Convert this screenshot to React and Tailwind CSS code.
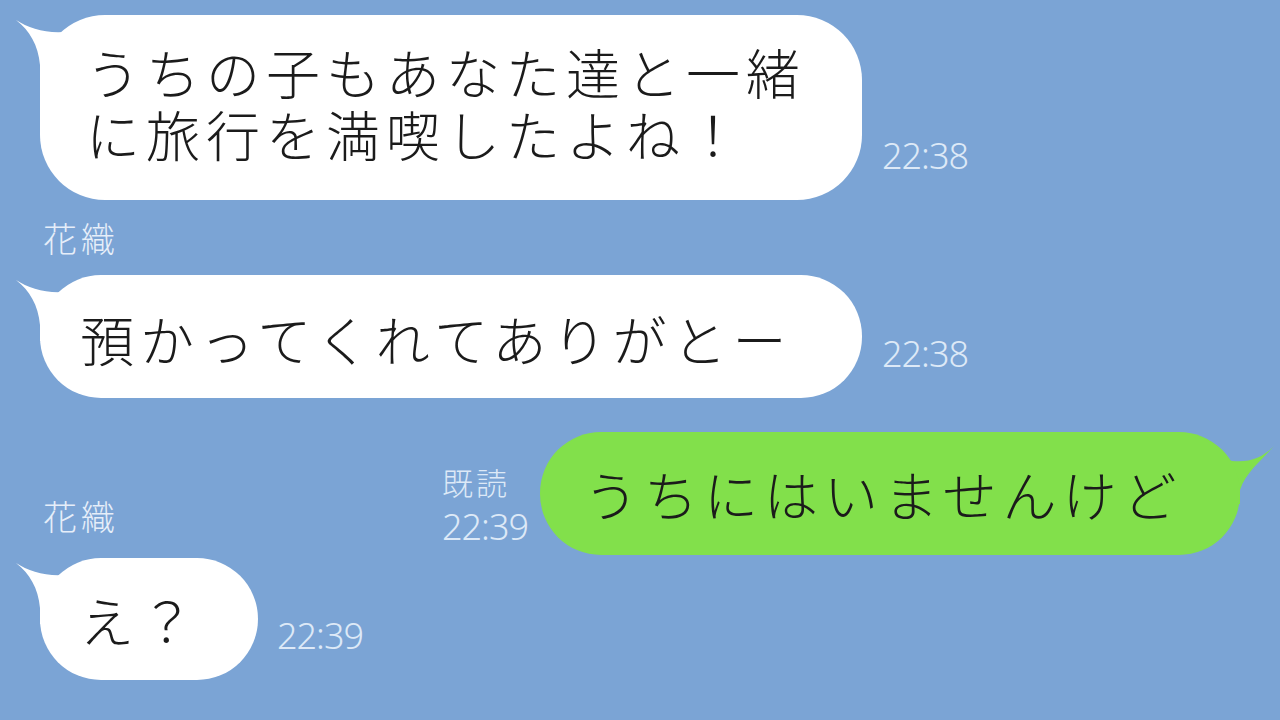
import React from "react";

const jp = {
  fontFamily:
    '"Noto Sans CJK JP Light", "Noto Sans CJK JP DemiLight", "Noto Sans CJK JP", "Noto Sans", sans-serif',
};
const latin = { fontFamily: '"Noto Sans", "Noto Sans CJK JP", sans-serif' };

// 左向きのしっぽ（白い吹き出し用）
function TailLeft() {
  return (
    <svg
      className="absolute left-[-26px] top-0"
      width="60"
      height="66"
      viewBox="0 0 60 66"
    >
      <path
        d="M2 5 C16 14 36 20 58 16 L58 66 L26 66 L26 50 C24 30 16 16 2 5 Z"
        fill="#ffffff"
      />
    </svg>
  );
}

// 右向きのしっぽ（緑の吹き出し用）
function TailRight() {
  return (
    <svg
      className="absolute right-[-36px] top-0"
      width="70"
      height="72"
      viewBox="0 0 70 72"
    >
      <path
        d="M68 14 C56 26 42 32 20 28 L20 72 L34 72 L34 58 C40 40 56 28 68 14 Z"
        fill="#82e04b"
      />
    </svg>
  );
}

function Time({ children, className = "" }) {
  return (
    <span
      style={latin}
      className={`text-[36px] leading-none font-light tracking-[-1px] text-[#dde9f7] ${className}`}
    >
      {children}
    </span>
  );
}

function Name() {
  return (
    <div
      style={jp}
      className="ml-[3px] text-[34px] leading-none font-light tracking-[4px] text-[#e6eef9]"
    >
      花織
    </div>
  );
}

export default function App() {
  return (
    <main className="w-[1280px] h-[720px] overflow-hidden bg-[#7ba4d5] px-[40px] pt-[15px]">
      {/* 1つ目 */}
      <div className="flex items-end gap-[20px]">
        <div className="relative">
          <TailLeft />
          <div
            style={jp}
            className="relative w-[822px] h-[185px] rounded-[65px] bg-white pl-[46px] pt-[26px] text-[54px] font-light leading-[62px] tracking-[6px] text-[#1b1b1b]"
          >
            <div>うちの子もあなた達と一緒</div>
            <div>に旅行を満喫したよね！</div>
          </div>
        </div>
        <Time className="mb-[26px]">22:38</Time>
      </div>

      <div className="mt-[21px]">
        <Name />
      </div>

      {/* 2つ目 */}
      <div className="mt-[20px] flex items-end gap-[20px]">
        <div className="relative">
          <TailLeft />
          <div
            style={jp}
            className="relative flex items-center w-[822px] h-[123px] rounded-[61px] bg-white pl-[40px] pt-[4px] text-[54px] font-light tracking-[6px] text-[#1b1b1b]"
          >
            預かってくれてありがとー
          </div>
        </div>
        <Time className="mb-[26px]">22:38</Time>
      </div>

      {/* 自分の返信 */}
      <div className="mt-[34px] flex items-end justify-between">
        <div className="mb-[22px]">
          <Name />
        </div>
        <div className="flex items-end gap-[12px]">
          <div className="mb-[10px] flex flex-col items-start gap-[12px]">
            <span
              style={jp}
              className="text-[31px] leading-none font-light tracking-[3px] text-[#dde9f7]"
            >
              既読
            </span>
            <Time>22:39</Time>
          </div>
          <div className="relative">
            <TailRight />
            <div
              style={jp}
              className="relative flex items-center w-[700px] h-[123px] rounded-[61px] bg-[#82e04b] pl-[44px] text-[54px] font-light tracking-[6px] text-[#1b1b1b]"
            >
              うちにはいませんけど
            </div>
          </div>
        </div>
      </div>

      {/* 4つ目 */}
      <div className="mt-[3px] flex items-end gap-[19px]">
        <div className="relative">
          <TailLeft />
          <div
            style={jp}
            className="relative flex items-center w-[218px] h-[122px] rounded-[61px] bg-white pl-[40px] text-[54px] font-light tracking-[6px] text-[#1b1b1b]"
          >
            え？
          </div>
        </div>
        <Time className="mb-[26px]">22:39</Time>
      </div>
    </main>
  );
}
